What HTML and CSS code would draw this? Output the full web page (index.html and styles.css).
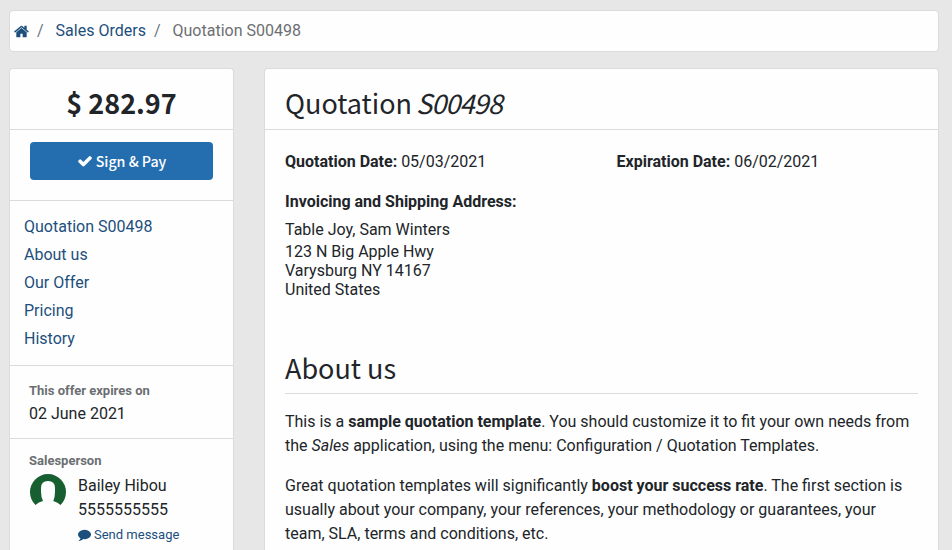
FILE: index.html
```html
<!DOCTYPE html>
<html lang="en">
<head>
    <meta charset="UTF-8">
    <meta name="viewport" content="width=device-width, initial-scale=1.0">
    <title>Quotation S00498</title>
    <link rel="stylesheet" href="styles.css">
</head>
<body>
    <nav class="breadcrumb">
        <a href="#" class="home">
            <svg class="icon-home" viewBox="0 0 1664 1792"><path d="M1408 992v480q0 26-19 45t-45 19h-384v-384h-256v384h-384q-26 0-45-19t-19-45v-480q0-1 .5-3t.5-3l575-474 575 474q1 2 1 6zm223-69l-62 74q-8 9-21 11h-3q-13 0-21-7l-692-577-692 577q-12 8-24 7-13-2-21-11l-62-74q-8-10-7-23.5t11-21.5l719-599q32-26 76-26t76 26l244 204v-195q0-14 9-23t23-9h192q14 0 23 9t9 23v408l219 182q10 8 11 21.5t-7 23.5z"/></svg>
        </a>
        <span class="separator">/</span>
        <a href="#">Sales Orders</a>
        <span class="separator">/</span>
        <span class="current">Quotation S00498</span>
    </nav>

    <div class="layout">
        <aside class="sidebar">
            <h2 class="amount">$ 282.97</h2>
            <div class="sign">
                <button class="sign-button">
                    <svg class="icon-check" viewBox="0 0 1792 1792"><path d="M1671 566q0 40-28 68l-724 724-136 136q-28 28-68 28t-68-28l-136-136-362-362q-28-28-28-68t28-68l136-136q28-28 68-28t68 28l294 295 656-657q28-28 68-28t68 28l136 136q28 28 28 68z"/></svg>
                    <span>Sign &amp; Pay</span>
                </button>
            </div>
            <ul class="menu">
                <li><a href="#quotation">Quotation S00498</a></li>
                <li><a href="#about">About us</a></li>
                <li><a href="#">Our Offer</a></li>
                <li><a href="#">Pricing</a></li>
                <li><a href="#">History</a></li>
            </ul>
            <div class="expires">
                <div class="small-title">This offer expires on</div>
                <div>02 June 2021</div>
            </div>
            <div class="salesperson">
                <div class="small-title">Salesperson</div>
                <div class="contact">
                    <svg class="avatar" viewBox="0 0 36 36"><path d="M5.5 31A18 18 0 1 1 30.5 31Q28 28.5 23.3 27Q25 23 25 17.5V14Q25 7 18 7Q11 7 11 14V17.5Q11 23 13 27Q8.5 28 5.5 31Z"/></svg>
                    <div class="contact-info">
                        <div>Bailey Hibou</div>
                        <div>5555555555</div>
                        <a href="#" class="send-message">
                            <svg class="icon-comment" viewBox="0 0 1792 1792"><path d="M1792 896q0 174-120 321.5t-326 233-450 85.5q-70 0-145-8-198 175-460 242-49 14-114 22-17 2-30.5-9t-17.5-29v-1q-3-4-.5-12t2-10 4.5-9.5l6-9 7-8.5 8-9q7-8 31-34.5t34.5-38 31-39.5 32.5-51 27-59 26-76q-157-89-247.5-220t-90.5-281q0-130 71-248.5t191-204.5 286-136.5 348-50.5q244 0 450 85.5t326 233 120 321.5z"/></svg>
                            <span>Send message</span>
                        </a>
                    </div>
                </div>
            </div>
        </aside>

        <main class="content">
            <h2 class="title" id="quotation">Quotation <em>S00498</em></h2>
            <div class="details">
                <div class="dates">
                    <div><strong>Quotation Date:</strong> 05/03/2021</div>
                    <div><strong>Expiration Date:</strong> 06/02/2021</div>
                </div>
                <strong>Invoicing and Shipping Address:</strong>
                <address>
                    <div class="customer">Table Joy, Sam Winters</div>
                    <div>123 N Big Apple Hwy</div>
                    <div>Varysburg NY 14167</div>
                    <div>United States</div>
                </address>
            </div>
            <section class="about" id="about">
                <h2>About us</h2>
                <p>This is a <strong>sample quotation template</strong>. You should customize it to fit your own needs from the <em>Sales</em> application, using the menu: Configuration / Quotation Templates.</p>
                <p>Great quotation templates will significantly <strong>boost your success rate</strong>. The first section is usually about your company, your references, your methodology or guarantees, your team, SLA, terms and conditions, etc.</p>
            </section>
        </main>
    </div>
</body>
</html>
```
FILE: styles.css
```css
* {
    box-sizing: border-box;
}

body {
    font-family: Roboto, "Liberation Sans", sans-serif;
    font-size: 16px;
    line-height: 24px;
    color: #212529;
    background-color: #e7e7e7;
    display: flex;
    flex-direction: column;
    margin: 0;
    padding: 10px 13px 0 9px;
    height: 100vh;
    overflow: hidden;
}

a {
    color: #1d4f7c;
    text-decoration: none;
}

svg {
    fill: currentColor;
    flex: none;
}

h2 {
    font-family: "Noto Sans CJK SC", "Open Sans", sans-serif;
    font-size: 27px;
    font-weight: 400;
    line-height: 34px;
    margin: 0;
}

h2 em {
    letter-spacing: -0.9px;
    margin-left: -2px;
}

.breadcrumb {
    display: flex;
    align-items: center;
    flex: none;
    height: 42px;
    padding: 0 4px;
    background-color: #fefefe;
    border: 1px solid #dbdbdb;
    border-radius: 4px;
}

.home {
    display: flex;
}

.icon-home {
    width: 15px;
    height: 17px;
}

.separator {
    color: #6c757d;
    padding: 0 12px 0 8px;
}

.current {
    color: #6c6f72;
}

.layout {
    display: grid;
    grid-template-columns: 225px 675px;
    gap: 30px;
    flex: 1;
    min-height: 0;
    margin-top: 16px;
}

.sidebar,
.content {
    background-color: #fefefe;
    border: 1px solid #dbdbdb;
    border-bottom: none;
    border-radius: 4px 4px 0 0;
}

.amount {
    height: 61px;
    padding-top: 17px;
    font-weight: 700;
    text-align: center;
    border-bottom: 1px solid #dbdbdb;
}

.sign {
    height: 71px;
    padding: 12px 20px;
    border-bottom: 1px solid #dbdbdb;
}

.sign-button {
    display: flex;
    justify-content: center;
    align-items: center;
    gap: 3px;
    width: 100%;
    height: 38px;
    padding: 0;
    font-family: "Noto Sans CJK SC", "Open Sans", sans-serif;
    font-size: 14.2px;
    font-weight: 500;
    color: #fff;
    background-color: #246eb0;
    border: none;
    border-radius: 4px;
    cursor: pointer;
}

.icon-check {
    width: 16px;
    height: 16px;
}

.menu {
    list-style: none;
    margin: 0;
    height: 165px;
    padding: 12px 14px;
    line-height: 28px;
    border-bottom: 1px solid #dbdbdb;
}

.expires {
    height: 73px;
    padding: 13px 19px 0;
    border-bottom: 1px solid #dbdbdb;
}

.salesperson {
    padding: 10px 19px 0;
}

.small-title {
    font-size: 13px;
    font-weight: 700;
    line-height: 23px;
    color: #6c6f72;
}

.contact {
    display: flex;
    gap: 12px;
    padding-left: 1px;
}

.contact-info {
    padding-top: 2px;
}

.avatar {
    width: 36px;
    height: 36px;
    margin-top: 2px;
    color: #175f30;
}

.send-message {
    display: flex;
    align-items: center;
    gap: 3px;
    font-size: 13px;
    line-height: 26px;
}

.icon-comment {
    width: 13px;
    height: 13px;
    margin-bottom: 2px;
}

.title {
    height: 61px;
    padding: 17px 20px 0;
    border-bottom: 1px solid #dbdbdb;
}

.details {
    height: 221px;
    padding: 20px;
}

.dates {
    display: grid;
    grid-template-columns: 1fr 1fr;
    gap: 30px;
    margin-bottom: 16px;
}

address {
    font-style: normal;
    line-height: 19px;
    margin-top: 4px;
}

.customer {
    line-height: 24px;
}

.about {
    padding: 0 20px;
}

.about h2 {
    height: 43px;
    margin-bottom: 16px;
    border-bottom: 1px solid #dbdbdb;
}

.about p {
    margin: 0 0 16px;
}

.about p:last-child {
    margin-bottom: 0;
}
```
